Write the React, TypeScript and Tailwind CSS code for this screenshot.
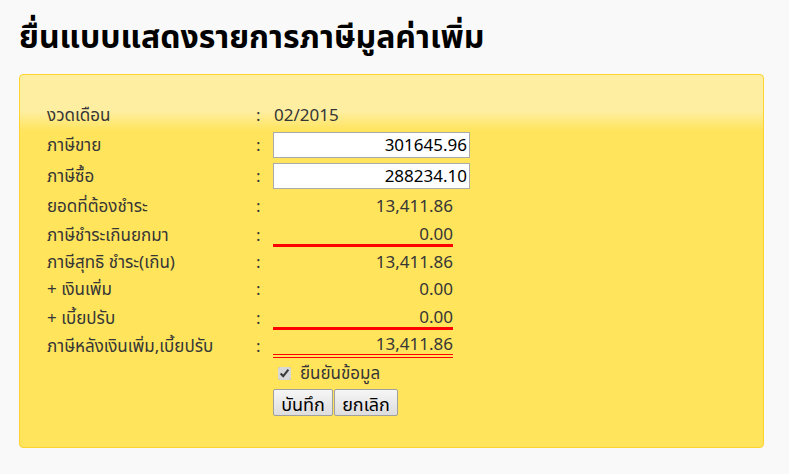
import React from "react";

const font = { fontFamily: "Tahoma, 'Noto Sans Thai', 'Noto Sans', 'DejaVu Sans', sans-serif" };

function Row({
  label,
  h,
  children,
}: {
  label: string;
  h: string;
  children: React.ReactNode;
}) {
  return (
    <div className={`flex items-center ${h}`}>
      <div className="w-[209px] shrink-0 pt-[3px]">{label}</div>
      <div className="w-[17px] shrink-0 pt-[3px]">:</div>
      <div className="flex-1">{children}</div>
    </div>
  );
}

export default function App() {
  return (
    <div className="min-h-[474px] bg-[#f9f9f9] px-[19px] pt-[17px] text-[#363636]" style={font}>
      <h1 className="text-[32px] font-bold leading-[42px] text-black">ยื่นแบบแสดงรายการภาษีมูลค่าเพิ่ม</h1>

      <div className="mt-[15px] h-[374px] w-[745px] rounded-[4px] border border-[#fed22f] bg-[linear-gradient(to_bottom,#feeea2_0px,#feeea2_36px,#ffe45c_56px,#ffe45c_100%)] pl-[27px] pt-[25px] text-[17px]">
        <Row label="งวดเดือน" h="h-[30px]">
          <span className="block pl-[1px] pt-[3px]">02/2015</span>
        </Row>
        <Row label="ภาษีขาย" h="h-[31px]">
          <input
            readOnly
            value="301645.96"
            className="h-[26px] w-[197px] border border-[#a9a9a9] bg-white px-[2px] pt-[2px] text-right text-black outline-none"
          />
        </Row>
        <Row label="ภาษีซื้อ" h="h-[31px]">
          <input
            readOnly
            value="288234.10"
            className="h-[26px] w-[197px] border border-[#a9a9a9] bg-white px-[2px] pt-[2px] text-right text-black outline-none"
          />
        </Row>
        <Row label="ยอดที่ต้องชำระ" h="h-[29px]">
          <div className="w-[180px] pt-[3px] text-right">13,411.86</div>
        </Row>
        <Row label="ภาษีชำระเกินยกมา" h="h-[28px]">
          <div className="w-[180px] border-b-[3px] border-[#ff0000] pt-[3px] text-right leading-[17px]">0.00</div>
        </Row>
        <Row label="ภาษีสุทธิ ชำระ(เกิน)" h="h-[26px]">
          <div className="w-[180px] pt-[3px] text-right">13,411.86</div>
        </Row>
        <Row label="+ เงินเพิ่ม" h="h-[28px]">
          <div className="w-[180px] pt-[3px] text-right">0.00</div>
        </Row>
        <Row label="+ เบี้ยปรับ" h="h-[30px]">
          <div className="w-[180px] border-b-[3px] border-[#ff0000] pt-[3px] text-right leading-[17px]">0.00</div>
        </Row>
        <Row label="ภาษีหลังเงินเพิ่ม,เบี้ยปรับ" h="h-[26px]">
          <div className="w-[180px] border-b-4 border-double border-[#ff0000] pt-[3px] text-right leading-[17px]">13,411.86</div>
        </Row>

        <div className="flex h-[28px] items-center pl-[226px]">
          <label className="flex items-center gap-[9px] pl-[5px]">
            <input
              type="checkbox"
              checked
              onChange={() => {}}
              className="h-[13px] w-[13px] accent-[#d8d8d8]"
            />
            <span className="pt-[3px]">ยืนยันข้อมูล</span>
          </label>
        </div>

        <div className="flex pl-[226px] pt-[2px]">
          <button className="h-[27px] w-[60px] rounded-[2px] border border-[#a0a0a0] bg-[linear-gradient(to_bottom,#f6f6f6,#dddddd)] pt-[2px] text-[18px] text-black">
            บันทึก
          </button>
          <button className="ml-[1px] h-[27px] w-[64px] rounded-[2px] border border-[#a0a0a0] bg-[linear-gradient(to_bottom,#f6f6f6,#dddddd)] pt-[2px] text-[18px] text-black">
            ยกเลิก
          </button>
        </div>
      </div>
    </div>
  );
}
